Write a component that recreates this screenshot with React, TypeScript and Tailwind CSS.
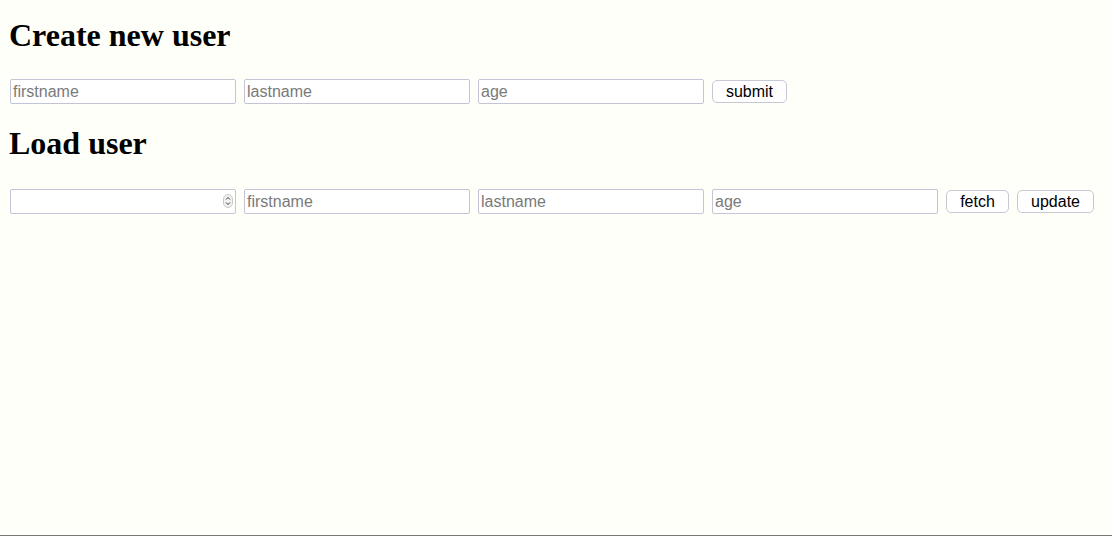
import { useState } from "react";

const inputCls =
  "w-[226px] h-[25px] px-[2px] border border-[#c4c4d4] rounded-[2px] bg-white text-[16px] text-black placeholder:text-[#7a7a7a] outline-none";
const btnCls =
  "h-[23px] px-[10px] border border-[#c8c8d4] rounded-[5px] bg-white text-[16px] text-black leading-none";

export default function App() {
  const [users] = useState<string[]>([]);

  return (
    <div
      className="min-h-[536px] bg-[#fffffa] px-[8px] border-b border-[#777777]"
      style={{ fontFamily: '"Liberation Sans", Arial, sans-serif' }}
    >
      <h1
        className="pt-[17px] text-[32px] leading-[37px] font-bold text-black pl-[1px]"
        style={{ fontFamily: '"Liberation Serif", "Times New Roman", serif' }}
      >
        Create new user
      </h1>
      <div className="mt-[25px] flex items-center gap-[8px] pl-[2px]">
        <input className={inputCls} placeholder="firstname" />
        <input className={inputCls} placeholder="lastname" />
        <input className={inputCls} placeholder="age" />
        <button className={btnCls + " w-[75px]"}>submit</button>
      </div>
      <h1
        className="mt-[21px] text-[32px] leading-[37px] font-bold text-black pl-[1px]"
        style={{ fontFamily: '"Liberation Serif", "Times New Roman", serif' }}
      >
        Load user
      </h1>
      <div className="mt-[27px] flex items-center gap-[8px] pl-[2px]">
        <div className="relative">
          <select className={inputCls + " appearance-none"}>
            {users.map(u => (
              <option key={u}>{u}</option>
            ))}
          </select>
          <svg
            className="absolute right-[3px] top-[5px] pointer-events-none"
            width="10"
            height="14"
            viewBox="0 0 10 14"
          >
            <rect x="0.5" y="0.5" width="9" height="13" rx="4.5" fill="#f2f2f2" stroke="#c8c8c8" />
            <path d="M3 5.5 L5 3.5 L7 5.5 M3 8.5 L5 10.5 L7 8.5" fill="none" stroke="#333" strokeWidth="1" />
          </svg>
        </div>
        <input className={inputCls} placeholder="firstname" />
        <input className={inputCls} placeholder="lastname" />
        <input className={inputCls} placeholder="age" />
        <button className={btnCls + " w-[63px]"}>fetch</button>
        <button className={btnCls + " w-[77px]"}>update</button>
      </div>
    </div>
  );
}
